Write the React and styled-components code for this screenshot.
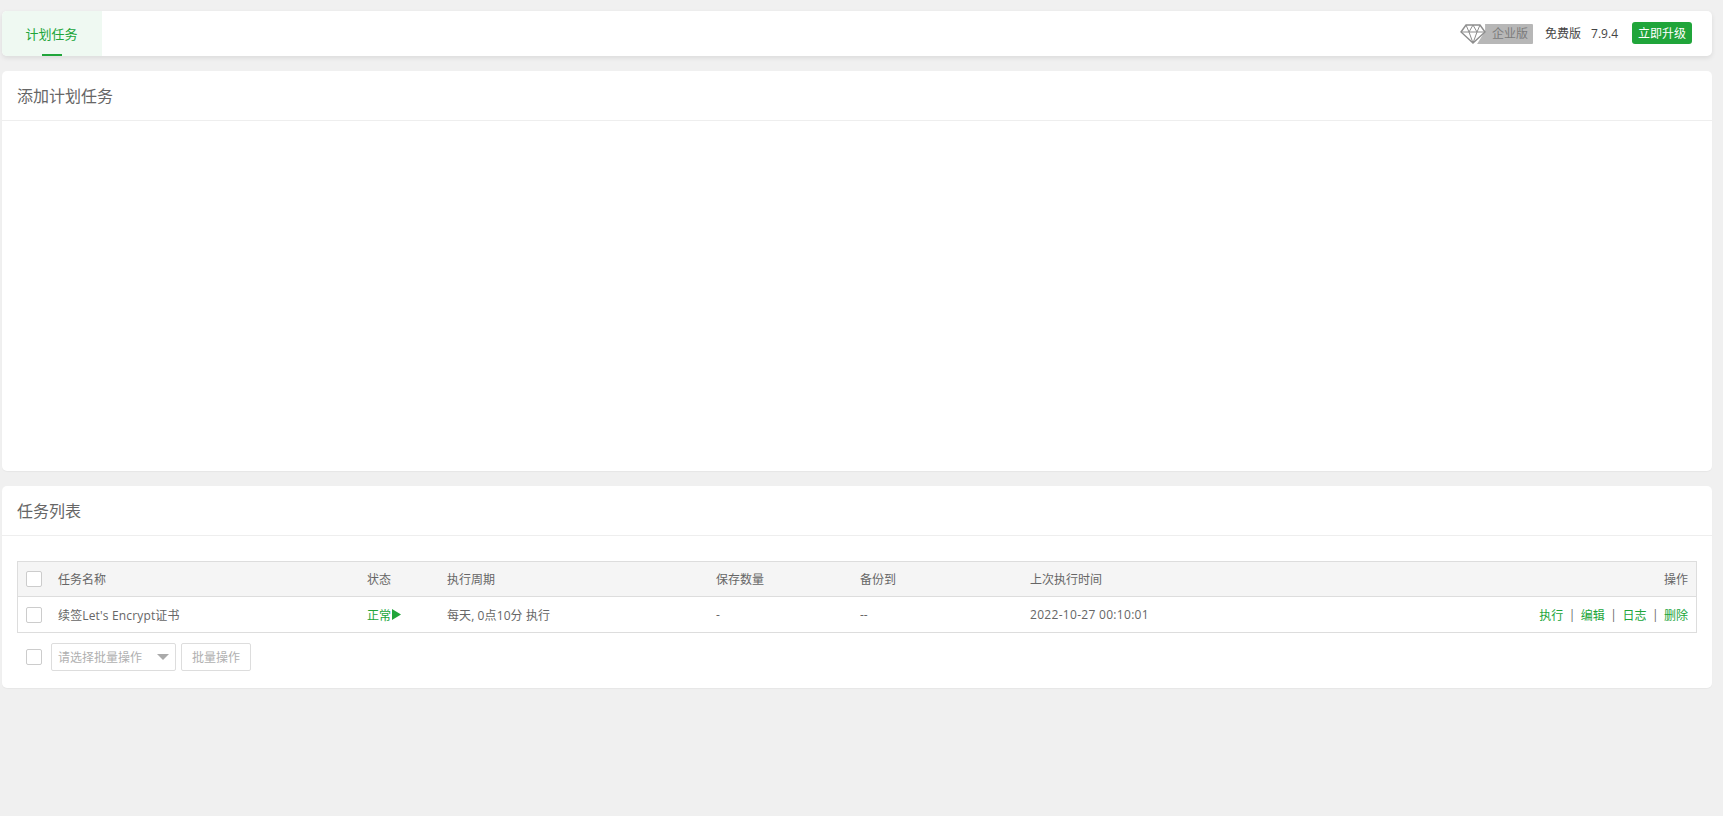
import React from "react";
import styled, { createGlobalStyle } from "styled-components";

const Global = createGlobalStyle`
  html, body { margin: 0; padding: 0; background: #f0f0f0; }
  body { font-family: "Open Sans", "Noto Sans CJK SC", sans-serif; font-size: 12px; color: #666; }
  * { box-sizing: border-box; }
`;

const Page = styled.div`
  width: 1723px;
  height: 816px;
  padding: 11px 11px 0 2px;
  display: flex;
  flex-direction: column;
  gap: 15px;
  overflow: hidden;
`;

const TopBar = styled.header`
  height: 45px;
  background: #fff;
  border-radius: 5px;
  box-shadow: 0 2px 5px rgba(0, 0, 0, 0.09);
  display: flex;
  justify-content: space-between;
  align-items: stretch;
`;

const ActiveTab = styled.div`
  position: relative;
  width: 100px;
  background: #eff9f2;
  border-radius: 5px 0 0 5px;
  color: #20a53a;
  font-size: 13px;
  display: flex;
  align-items: center;
  justify-content: center;
  padding-right: 1px;
  &::after {
    content: "";
    position: absolute;
    left: 40px;
    bottom: 0;
    width: 20px;
    height: 2px;
    background: #20a53a;
  }
`;

const Right = styled.div`
  display: flex;
  align-items: center;
  padding: 0 20px 1px 0;
`;

const Enterprise = styled.div`
  display: flex;
  align-items: center;
  height: 22px;
  margin: 2px 12px 0 0;
`;

const Diamond = styled.svg`
  width: 26px;
  height: 22px;
  margin-right: -9px;
  position: relative;
  z-index: 1;
`;

const EnterpriseLabel = styled.span`
  width: 56px;
  height: 20px;
  background: #b7b7b7;
  border-radius: 0 1px 1px 0;
  clip-path: polygon(8px 0, 100% 0, 100% 100%, 0 100%, 8px 7px);
  color: #7b7b7b;
  font-size: 12px;
  line-height: 20px;
  text-align: right;
  padding-right: 5px;
`;

const VersionLabel = styled.span`
  color: #444;
  font-size: 12px;
  margin-right: 10px;
`;

const Version = styled.span`
  color: #444;
  font-size: 12px;
  margin-right: 14px;
`;

const Upgrade = styled.button`
  width: 60px;
  height: 22px;
  border: 0;
  padding: 0;
  border-radius: 3px;
  background: #20a53a;
  color: #fff;
  font: inherit;
  font-size: 12px;
`;

const Card = styled.section`
  background: #fff;
  border-radius: 5px;
  box-shadow: 0 1px 1px rgba(0, 0, 0, 0.04);
  height: ${(p) => p.$height}px;
`;

const CardTitle = styled.h2`
  margin: 0;
  height: 50px;
  padding: 0 15px;
  border-bottom: 1px solid #eee;
  font-size: 16px;
  font-weight: 400;
  line-height: 50px;
  color: #666;
`;

const CardBody = styled.div`
  padding: 25px 15px 0;
`;

const Table = styled.div`
  border: 1px solid #ddd;
`;

const Row = styled.div`
  display: grid;
  grid-template-columns: 40px 309px 80px 269px 144px 170px 1fr auto;
  align-items: center;
  height: 35px;
  padding-right: 8px;
  background: ${(p) => (p.$head ? "#f5f5f5" : "#fff")};
  border-bottom: ${(p) => (p.$head ? "1px solid #ddd" : "0")};
  font-size: 12px;
  color: #666;
`;

const Check = styled.span`
  display: block;
  width: 16px;
  height: 16px;
  background: #fff;
  border: 1px solid #ccc;
  border-radius: 2px;
  margin-left: 8px;
`;

const Status = styled.span`
  color: #20a53a;
  display: flex;
  align-items: center;
`;

const Play = styled.svg`
  width: 10px;
  height: 11px;
  margin-left: 1px;
`;

const Spaced = styled.span`
  letter-spacing: ${(p) => p.$amount}px;
`;

const Ops = styled.div`
  color: #20a53a;
  display: flex;
  align-items: center;
`;

const Sep = styled.span`
  color: #666;
  margin: 0 5.5px;
`;

const Batch = styled.div`
  display: flex;
  align-items: center;
  margin-top: 10px;
  height: 28px;
`;

const BatchCheck = styled(Check)`
  margin-left: 9px;
  margin-right: 9px;
`;

const BatchSelect = styled.div`
  width: 125px;
  height: 28px;
  border: 1px solid #ddd;
  border-radius: 2px;
  padding: 0 6px 1px;
  display: flex;
  align-items: center;
  justify-content: space-between;
  color: #b0b0b0;
  font-size: 12px;
`;

const Caret = styled.span`
  width: 0;
  height: 0;
  border-left: 6px solid transparent;
  border-right: 6px solid transparent;
  border-top: 6px solid #aaa;
`;

const BatchButton = styled.button`
  width: 70px;
  height: 28px;
  margin-left: 5px;
  padding: 0 0 1px;
  background: #fff;
  border: 1px solid #ddd;
  border-radius: 2px;
  color: #b0b0b0;
  font: inherit;
  font-size: 12px;
`;

export default function App() {
  return (
    <Page>
      <Global />
      <TopBar>
        <ActiveTab>计划任务</ActiveTab>
        <Right>
          <Enterprise>
            <Diamond viewBox="0 0 26 22" fill="none" stroke="#8d8d8d" strokeWidth="1.4">
              <path d="M6 2h14l5 7L13 20 1 9z" />
              <path d="M1 9h24M6 2l3 7 4 11 4-11 3-7M9 9l4-7 4 7" strokeWidth="1" />
            </Diamond>
            <EnterpriseLabel>企业版</EnterpriseLabel>
          </Enterprise>
          <VersionLabel>免费版</VersionLabel>
          <Version>7.9.4</Version>
          <Upgrade>立即升级</Upgrade>
        </Right>
      </TopBar>

      <Card $height={400}>
        <CardTitle>添加计划任务</CardTitle>
      </Card>

      <Card $height={202}>
        <CardTitle>任务列表</CardTitle>
        <CardBody>
          <Table>
            <Row $head>
              <Check />
              <span>任务名称</span>
              <span>状态</span>
              <span>执行周期</span>
              <span>保存数量</span>
              <span>备份到</span>
              <span>上次执行时间</span>
              <span>操作</span>
            </Row>
            <Row>
              <Check />
              <Spaced $amount={0.15}>续签Let's Encrypt证书</Spaced>
              <Status>
                正常
                <Play viewBox="0 0 10 11"><path d="M0 0l9 5.5L0 11z" fill="#20a53a" /></Play>
              </Status>
              <Spaced $amount={0.1}>每天, 0点10分 执行</Spaced>
              <span>-</span>
              <span>--</span>
              <Spaced $amount={0.3}>2022-10-27 00:10:01</Spaced>
              <Ops>
                执行<Sep>|</Sep>编辑<Sep>|</Sep>日志<Sep>|</Sep>删除
              </Ops>
            </Row>
          </Table>
          <Batch>
            <BatchCheck />
            <BatchSelect>
              请选择批量操作
              <Caret />
            </BatchSelect>
            <BatchButton>批量操作</BatchButton>
          </Batch>
        </CardBody>
      </Card>
    </Page>
  );
}
